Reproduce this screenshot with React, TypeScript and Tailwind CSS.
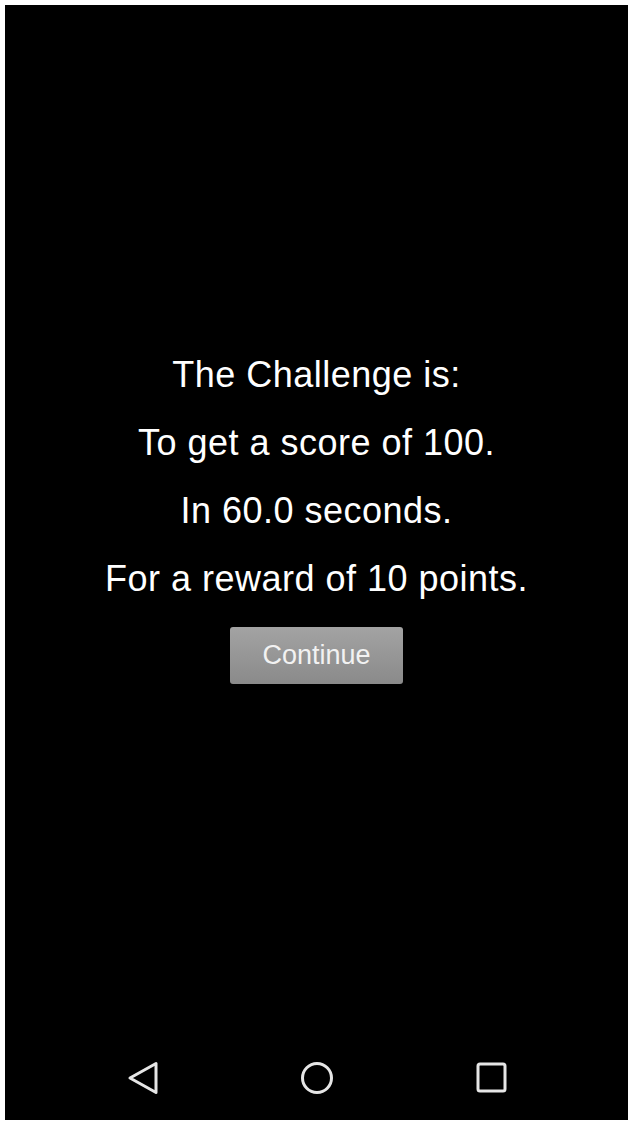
const lines = [
  "The Challenge is:",
  "To get a score of 100.",
  "In 60.0 seconds.",
  "For a reward of 10 points.",
];

const NavBar = () => {
  return (
    <div className="flex h-[80px] items-center justify-center gap-[134px] pb-[4px]">
      <svg width="40" height="40" viewBox="0 0 40 40">
        <path
          d="M33 5.5 L33 34.5 L7 20 Z"
          fill="none"
          stroke="#e6e6e6"
          strokeWidth="3"
          strokeLinejoin="round"
        />
      </svg>
      <svg width="40" height="40" viewBox="0 0 40 40">
        <circle cx="20" cy="20" r="14.5" fill="none" stroke="#e6e6e6" strokeWidth="3" />
      </svg>
      <svg width="40" height="40" viewBox="0 0 40 40">
        <rect
          x="7"
          y="6"
          width="27"
          height="27"
          rx="2"
          fill="none"
          stroke="#e6e6e6"
          strokeWidth="3"
        />
      </svg>
    </div>
  );
};

const App = () => {
  return (
    <div className="h-[1125px] w-[632px] bg-white pb-[5px] pl-[5px] pr-[4px] pt-[5px]">
      <div
        className="flex h-full flex-col bg-black text-white"
        style={{ fontFamily: '"Liberation Sans", Arial, sans-serif' }}
      >
        <div className="flex flex-1 flex-col items-center justify-center pb-[20px]">
          {lines.map((line, i) => (
            <p
              key={`line-${i}`}
              className="text-[36px] leading-[68px] tracking-[0.5px] text-white"
            >
              {line}
            </p>
          ))}
          <button
            type="button"
            className="mt-[14px] h-[57px] w-[173px] rounded-[3px] bg-gradient-to-b from-[#a3a3a3] to-[#8a8a8a] text-[27px] text-[#f2f2f2]"
          >
            Continue
          </button>
        </div>
        <NavBar />
      </div>
    </div>
  );
};

export default App;
